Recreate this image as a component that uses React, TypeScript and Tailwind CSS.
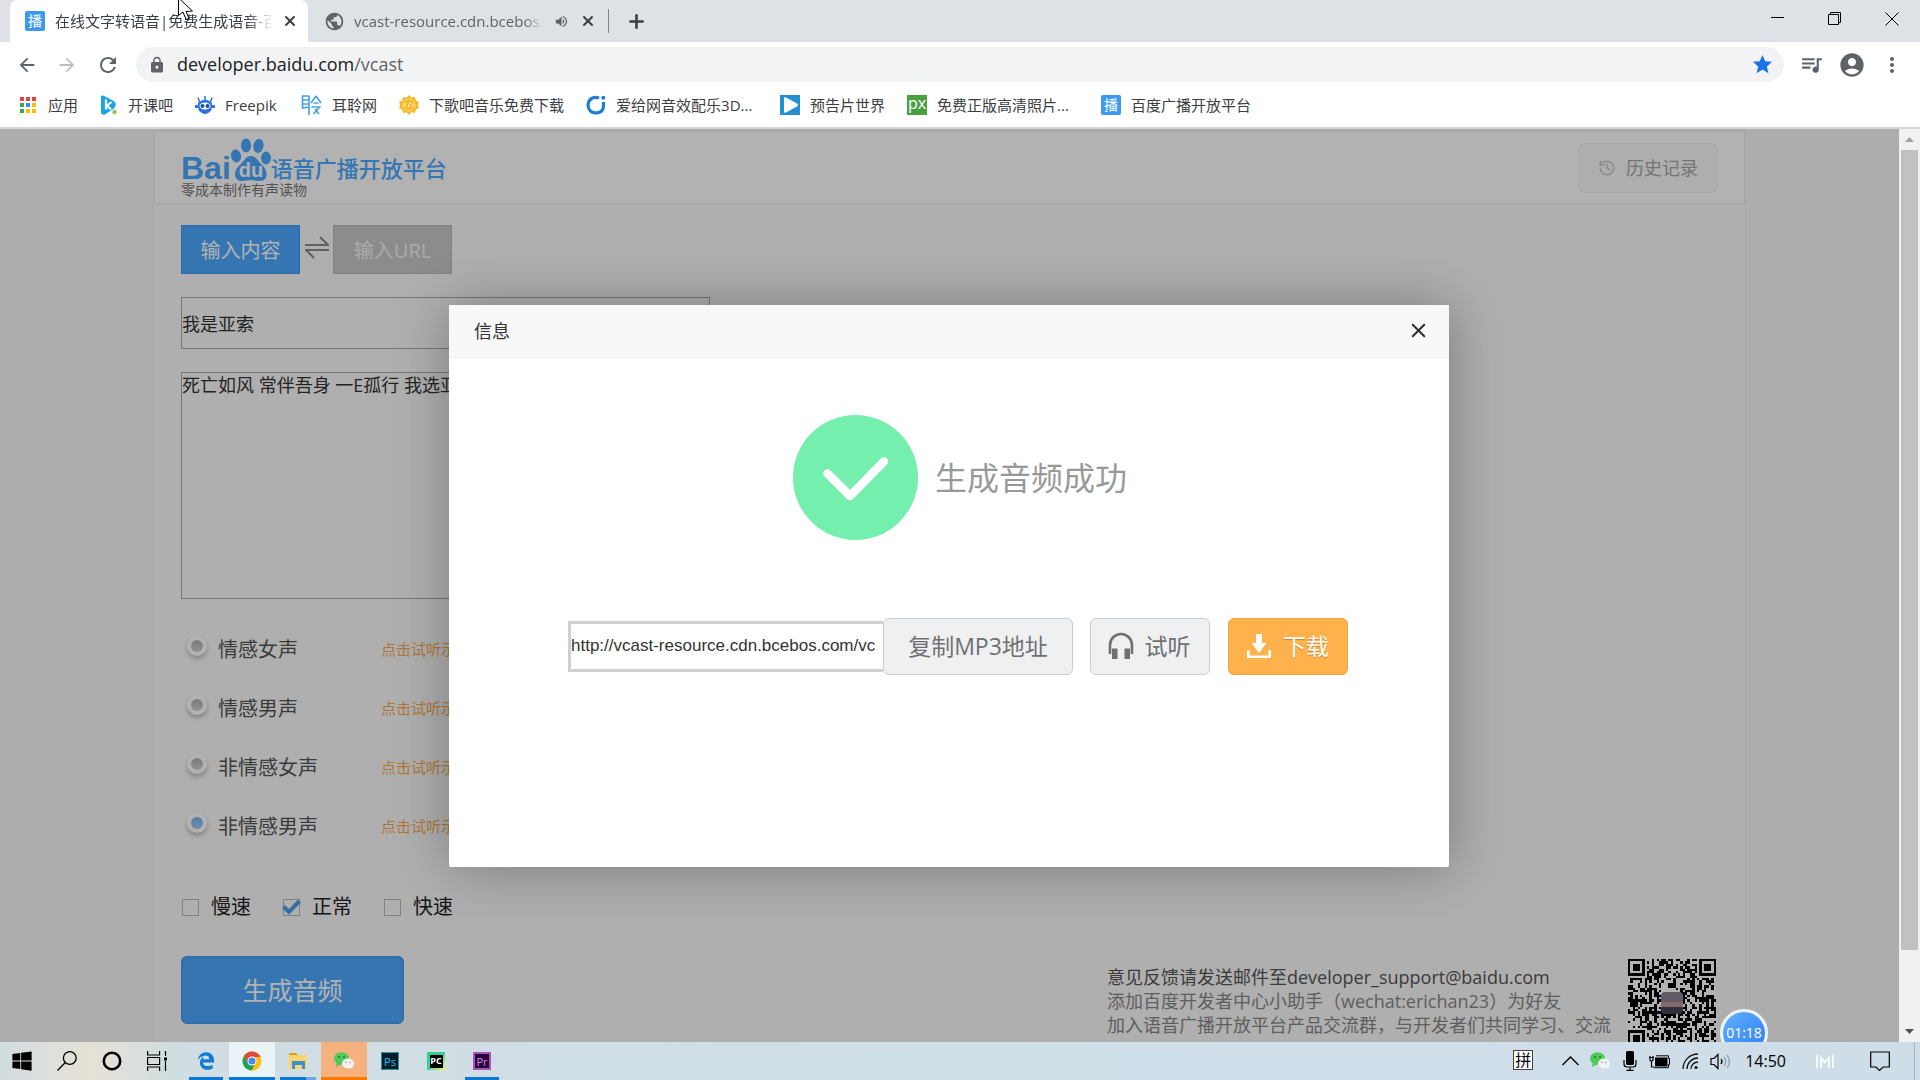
import React, { useState } from 'react';
import {
  MdAccountCircle,
  MdArrowBack,
  MdArrowForward,
  MdLock,
  MdMoreVert,
  MdPublic,
  MdQueueMusic,
  MdRefresh,
  MdStar,
  MdVolumeUp
} from 'react-icons/md';
import { FaEdgeLegacy, FaWindows } from 'react-icons/fa6';
import { HistoryIcon, PlusIcon, XIcon } from 'lucide-react';

interface Voice {
  id: string;
  name: string;
}

const VOICES: Voice[] = [
  { id: 'f-emotion', name: '情感女声' },
  { id: 'm-emotion', name: '情感男声' },
  { id: 'f-plain', name: '非情感女声' },
  { id: 'm-plain', name: '非情感男声' }
];

const SPEEDS = ['慢速', '正常', '快速'];

/* ---------- browser chrome ---------- */

const BoFavicon = () => (
  <span className="flex h-5 w-5 shrink-0 items-center justify-center rounded-xs bg-[#3b99f0] text-sm leading-none text-white">播</span>
);

const TabStrip = () => (
  <div className="flex h-[42px] items-center bg-[#dee1e6] pl-[10px]">
    <div className="flex h-full w-[298px] shrink-0 items-center rounded-t-lg bg-white pr-[10px] pl-[15px]">
      <BoFavicon />
      <div className="ml-[10px] w-[218px] overflow-hidden whitespace-nowrap text-[15px] text-[#3c4043] [mask-image:linear-gradient(to_right,black_88%,transparent)]">
        在线文字转语音|免费生成语音-百度
      </div>
      <button aria-label="关闭标签页" className="ml-auto text-[#3c4043]">
        <XIcon size={16} strokeWidth={3} />
      </button>
    </div>
    <div className="flex h-full w-[300px] shrink-0 items-center pr-3 pl-4">
      <MdPublic size={21} className="shrink-0 text-[#5f6368]" />
      <div className="ml-[9px] w-[189px] overflow-hidden whitespace-nowrap text-[15px] text-[#5f6368] [mask-image:linear-gradient(to_right,black_90%,transparent)]">
        vcast-resource.cdn.bcebos.com
      </div>
      <MdVolumeUp size={15} className="ml-[11px] shrink-0 text-[#5f6368]" />
      <button aria-label="关闭标签页" className="ml-auto text-[#3c4043]">
        <XIcon size={16} strokeWidth={3} />
      </button>
    </div>
    <div className="h-6 w-px bg-[#80868b]" />
    <button aria-label="新标签页" className="ml-[17px] text-[#3c4043]">
      <PlusIcon size={21} strokeWidth={3} />
    </button>
    <div className="ml-auto flex h-full items-center pb-[5px]">
      <button aria-label="最小化" className="flex w-[57px] justify-center">
        <svg width="13" height="13" viewBox="0 0 13 13"><path d="M0 5.500H13" stroke="#000" /></svg>
      </button>
      <button aria-label="还原" className="flex w-[57px] justify-center">
        <svg width="13" height="13" viewBox="0 0 13 13" fill="none" stroke="#000">
          <path d="M.5 2.500H10.500V12.500H.5ZM2.500 2.500V.5H12.500V10.500H10.500" />
        </svg>
      </button>
      <button aria-label="关闭" className="flex w-[57px] justify-center">
        <svg width="14" height="14" viewBox="0 0 14 14"><path d="M.5.5 13.500 13.500M13.500.5.5 13.500" stroke="#000" /></svg>
      </button>
    </div>
  </div>
);

const Toolbar = () => (
  <div className="flex h-[45px] items-center pr-4 pl-4 text-[#5f6368]">
    <button aria-label="后退" className="w-10"><MdArrowBack size={22} /></button>
    <button aria-label="前进" className="w-10 text-[#bdbfc2]"><MdArrowForward size={22} /></button>
    <button aria-label="刷新" className="w-10"><MdRefresh size={24} /></button>
    <div className="flex h-[35px] flex-1 items-center rounded-full bg-[#f1f3f4] pr-[10px] pl-3">
      <MdLock size={18} />
      <div className="ml-[11px] pb-px text-lg text-[#5f6368]">
        <span className="text-[#202124]">developer.baidu.com</span>/vcast
      </div>
      <MdStar size={23} className="ml-auto text-[#1a73e8]" />
    </div>
    <button aria-label="媒体控制" className="ml-[15px]"><MdQueueMusic size={25} /></button>
    <button aria-label="用户" className="ml-[14px]"><MdAccountCircle size={28} /></button>
    <button aria-label="菜单" className="ml-[14px]"><MdMoreVert size={24} /></button>
  </div>
);

const AppsIcon = () => (
  <svg width="20" height="20" viewBox="0 0 20 20">
    {['#ea4335', '#ea4335', '#ea4335', '#34a853', '#4285f4', '#fbbc04', '#34a853', '#fbbc04', '#fbbc04'].map((c, i) => (
      <rect key={i} x={2 + (i % 3) * 6} y={2 + Math.floor(i / 3) * 6} width="4" height="4" fill={c} />
    ))}
  </svg>
);

const KaikebaIcon = () => (
  <svg width="18" height="20" viewBox="0 0 18 20">
    <path d="M1 2Q1 0 3 .6L13 5.500q5 3.500 1 8L5 19.500Q1 20.500 1 17Z" fill="#19a5e4" />
    <path d="M6 4.500v10M11.500 7 7 10.500l4 4" stroke="#fff" strokeWidth="2.200" fill="none" />
    <circle cx="14.500" cy="17" r="2.600" fill="#8cc63f" stroke="#fff" strokeWidth=".8" />
  </svg>
);

const FreepikIcon = () => (
  <svg width="20" height="20" viewBox="0 0 20 20">
    <path d="M3 8q7-7 14 0l-.5 7q-6.500 8-13 0Z" fill="#2f73dc" />
    <path d="M10 5V1M4.500 7 3 2.500M15.500 7 17 2.500" stroke="#2f73dc" strokeWidth="1.500" />
    <path d="M0 10h20v3H0Z" fill="#2f73dc" />
    <ellipse cx="10" cy="11" rx="5.500" ry="3.500" fill="#fff" />
    <circle cx="7.500" cy="11" r="2" fill="#1a4fae" />
    <circle cx="12.500" cy="11" r="2" fill="#1a4fae" />
  </svg>
);

const ErlingIcon = () => (
  <svg width="21" height="20" viewBox="0 0 21 20" fill="none" stroke="#4aa3df" strokeWidth="1.700">
    <path d="M1 1h7.500M1.500 1v12l7-1M8 1v19M1 5h6M1 9h6M15 1l-5 7M15 1l5 7M12.500 8h5M10.500 12h8l-6 7M14 14l4 5" />
  </svg>
);

const XiagebaIcon = () => (
  <svg width="20" height="20" viewBox="0 0 20 20">
    <path d="M10 0l2.600 2.800L16 2l.8 3.600L20 7l-1.200 3L20 13l-3.200 1.400L16 18l-3.400-.8L10 20l-2.600-2.800L4 18l-.8-3.600L0 13l1.200-3L0 7l3.200-1.400L4 2l3.400.8Z" fill="#f6b820" />
    <circle cx="10" cy="10" r="6" fill="none" stroke="#fff8d8" strokeWidth=".6" />
    <path d="M7.500 8 5.500 10l2 2M12.500 8l2 2-2 2M11 7.500l-2 5" stroke="#fff" strokeWidth="1" fill="none" />
  </svg>
);

const AigeiIcon = () => (
  <svg width="20" height="20" viewBox="0 0 20 20" fill="none" stroke="#1c7ed6" strokeWidth="3.200">
    <path d="M13 3.200A7.500 7.800 0 1 0 11 17.800Q17.500 17 17.500 11V7" />
    <circle cx="17.300" cy="2.800" r="1" strokeWidth="2" />
  </svg>
);

const TrailerIcon = () => (
  <svg width="20" height="20" viewBox="0 0 20 20">
    <rect width="20" height="20" fill="#2490d0" />
    <path d="M4 3.500q0-2 2-1l11 6q2 1.500 0 3l-11 6q-2 1-2-1Z" fill="#fff" />
  </svg>
);

const PxIcon = () => (
  <span className="flex h-5 w-5 items-center justify-center bg-[#48a043] pb-1 text-base leading-none text-white">px</span>
);

const BOOKMARKS = [
  { label: '应用', icon: <AppsIcon />, width: '' },
  { label: '开课吧', icon: <KaikebaIcon />, width: '' },
  { label: 'Freepik', icon: <FreepikIcon />, width: 'w-[54px]' },
  { label: '耳聆网', icon: <ErlingIcon />, width: '' },
  { label: '下歌吧音乐免费下载', icon: <XiagebaIcon />, width: '' },
  { label: '爱给网音效配乐3D...', icon: <AigeiIcon />, width: 'w-[142px]' },
  { label: '预告片世界', icon: <TrailerIcon />, width: '' },
  { label: '免费正版高清照片...', icon: <PxIcon />, width: 'w-[142px]' },
  { label: '百度广播开放平台', icon: <BoFavicon />, width: '' }
];

const BookmarkBar = () => (
  <nav className="flex h-[42px] items-center gap-[22px] border-b-2 border-[#d4d4d4] pb-1 pl-[18px]">
    {BOOKMARKS.map((b) => (
      <a key={b.label} href="#" className="flex items-center gap-[10px] whitespace-nowrap text-[15px] text-[#3c4043]">
        {b.icon}
        <span className={b.width}>{b.label}</span>
      </a>
    ))}
  </nav>
);

/* ---------- page ---------- */

const BaiduLogo = () => (
  <div className="flex flex-col">
    <div className="flex items-end text-[#4caaff]">
      <span className="font-['Liberation_Sans'] text-[32px] leading-7 font-bold">Bai</span>
      <svg width="40" height="44" viewBox="0 0 40 44" fill="#4caaff">
        <ellipse cx="5" cy="18" rx="5" ry="6.500" transform="rotate(-12 5 18)" />
        <ellipse cx="15" cy="7.500" rx="5" ry="7" />
        <ellipse cx="27.500" cy="8" rx="5" ry="7" transform="rotate(10 27.500 8)" />
        <ellipse cx="35" cy="20" rx="5" ry="6.500" />
        <path d="M20 18c5 0 7 5 11 9 6 5 7 16-2 16-4 0-6-1-9-1s-5 1-9 1c-9 0-9-11-2-16 4-4 6-9 11-9Z" />
        <text x="20" y="39" textAnchor="middle" fill="#fff" fontFamily="Liberation Sans" fontSize="20" fontWeight="700">du</text>
      </svg>
      <span className="text-[22px] leading-7 font-medium">语音广播开放平台</span>
    </div>
    <span className="text-sm leading-4 text-[#777]">零成本制作有声读物</span>
  </div>
);

const SwapIcon = () => (
  <svg width="24" height="24" viewBox="0 0 24 24" fill="none" stroke="#8b8b8b" strokeWidth="2">
    <path d="M0 10H23L15 2M24 15H1L9 23" />
  </svg>
);

const QR_SIZE = 37;

const isFinder = (x: number, y: number) => {
  const nearX = x < 8 || x >= QR_SIZE - 8;
  const nearY = y < 8 || y >= QR_SIZE - 8;
  return nearX && nearY && !(x >= QR_SIZE - 8 && y >= QR_SIZE - 8);
};

const buildQrPath = () => {
  let seed = 20;
  let d = '';
  for (let y = 0; y < QR_SIZE; y++) {
    for (let x = 0; x < QR_SIZE; x++) {
      seed = (seed * 1103515245 + 12345) % 2147483648;
      if (!isFinder(x, y) && seed / 2147483648 > 0.48) d += `M${x} ${y}h1v1h-1Z`;
    }
  }
  return d;
};

const QrCode = () => (
  <svg width="88" height="88" viewBox="0 0 37 37" className="shrink-0 bg-white" shapeRendering="crispEdges">
    <path d={buildQrPath()} />
    {[[0, 0], [30, 0], [0, 30]].map(([x, y]) => (
      <g key={`${x}-${y}`}>
        <path d={`M${x} ${y}h7v7h-7ZM${x + 1} ${y + 1}v5h5v-5Z`} fillRule="evenodd" />
        <rect x={x + 2} y={y + 2} width="3" height="3" />
      </g>
    ))}
    <rect x="14" y="14" width="9" height="9" rx="1" fill="#8d8597" />
    <rect x="14" y="18" width="9" height="2" fill="#b8959a" />
    <rect x="14" y="20" width="9" height="3" rx="1" fill="#454456" />
  </svg>
);

const VoiceForm = () => {
  const [voice, setVoice] = useState('m-plain');
  const [speed, setSpeed] = useState('正常');
  return (
    <>
      <div className="flex items-center">
        <button className="h-[49px] w-[119px] border border-[#3f9bee] bg-[#4caaff] pt-0.5 text-xl text-white">输入内容</button>
        <span className="flex w-[33px] justify-center pb-1.5"><SwapIcon /></span>
        <button className="h-[49px] w-[119px] border border-[#bbb] bg-[#c9c9c9] pt-0.5 text-xl text-[#f4f4f4]">输入URL</button>
      </div>
      <input aria-label="标题" defaultValue="我是亚索" className="mt-[23px] block h-[52px] w-[529px] border border-[#a9a9a9] text-lg text-[#333]" />
      <textarea aria-label="内容" defaultValue="死亡如风 常伴吾身 一E孤行 我选亚索" className="mt-[23px] block h-[227px] w-[529px] resize-none border border-[#a9a9a9] text-lg leading-6 text-[#333]" />
      <div className="mt-[21px]">
        {VOICES.map((v) => (
          <div key={v.id} className="flex h-[59px] items-center">
            <label className="flex w-[200px] items-center text-xl text-[#555]">
              <input
                type="radio"
                name="voice"
                checked={voice === v.id}
                onChange={() => setVoice(v.id)}
                className="mr-[11px] mb-[7px] ml-[6px] flex h-5 w-5 appearance-none items-center justify-center rounded-full bg-white shadow-[0_3px_5px_rgba(0,0,0,0.25)] before:h-3 before:w-3 before:rounded-full before:bg-linear-to-b before:from-[#b0b0b0] before:to-[#d0d0d0] checked:before:from-[#78b4ec] checked:before:to-[#a0cdf2]"
              />
              {v.name}
            </label>
            <a href="#" className="text-[15px] text-[#fbab50]">点击试听示例</a>
          </div>
        ))}
      </div>
      <div className="mt-9 flex h-[30px] items-center">
        {SPEEDS.map((s) => (
          <label key={s} className="relative flex w-[101px] items-center text-xl text-[#222]">
            <input
              type="checkbox"
              checked={speed === s}
              onChange={() => setSpeed(s)}
              className="mr-3 ml-px h-[17px] w-[17px] appearance-none border border-[#bbb]"
            />
            {speed === s && (
              <svg className="absolute left-0" width="19" height="17" viewBox="0 0 19 17">
                <path d="M1.500 7.500 7 13 17.500 2" fill="none" stroke="#4a9fee" strokeWidth="4" />
              </svg>
            )}
            {s}
          </label>
        ))}
      </div>
    </>
  );
};

const VcastPage = () => (
  <div className="mx-[153px] mt-0.5 flex flex-1 flex-col border-x border-[#f2f2f2] bg-[#fbfbfb]">
    <header className="flex h-[73px] shrink-0 items-center justify-between border border-[#f0f0f0] bg-white pr-[27px] pl-[26px]">
      <BaiduLogo />
      <button className="flex h-[50px] w-[138px] items-center justify-center gap-[10px] rounded-md border border-[#f0f0f0] bg-[#fafafa] text-lg text-[#a6a6a6]">
        <HistoryIcon size={18} className="text-[#c8c8c8]" />
        历史记录
      </button>
    </header>
    <div className="pt-[21px] pr-[29px] pl-[27px]">
      <VoiceForm />
      <div className="mt-[34px] flex items-start justify-between">
        <button className="h-[68px] w-[223px] rounded-md border-2 border-[#429cf0] bg-[#4caaff] pt-0.5 text-[25px] text-white">生成音频</button>
        <div className="mt-[3px] flex">
          <div className="mt-1.5 w-[521px] text-lg leading-6 whitespace-nowrap text-[#888]">
            <p className="text-[#555]">意见反馈请发送邮件至developer_support@baidu.com</p>
            <p>添加百度开发者中心小助手（wechat:erichan23）为好友</p>
            <p>加入语音广播开放平台产品交流群，与开发者们共同学习、交流</p>
          </div>
          <QrCode />
        </div>
      </div>
    </div>
  </div>
);

const HeadphoneIcon = () => (
  <svg width="26" height="28" viewBox="0 0 26 28">
    <path d="M2 22V13a11 11 0 0 1 22 0v9" fill="none" stroke="#6e7073" strokeWidth="2.600" />
    <rect x="4" y="16.500" width="5.500" height="10.500" fill="#6e7073" />
    <rect x="16.500" y="16.500" width="5.500" height="10.500" fill="#6e7073" />
  </svg>
);

const DownloadIcon = () => (
  <svg width="24" height="26" viewBox="0 0 24 26">
    <path d="M9 1h6v9h4.500L12 20 4.500 10H9Z" fill="#fff" />
    <path d="M1.300 17v6.700h21.400V17" fill="none" stroke="#fff" strokeWidth="2.600" />
  </svg>
);

const SuccessDialog = ({ onClose }: { onClose: () => void }) => (
  <div role="dialog" aria-label="信息" className="h-[562px] w-[1000px] rounded-xs bg-white shadow-[1px_1px_55px_rgba(0,0,0,0.3)]">
    <div className="flex h-[53px] items-center justify-between border-b border-[#eee] bg-[#f8f8f8] pr-[19px] pl-[25px] text-lg text-[#333]">
      信息
      <button aria-label="关闭" onClick={onClose} className="text-[#2d2d2d]"><XIcon size={23} strokeWidth={2} /></button>
    </div>
    <div className="flex items-center gap-[17px] pt-[57px] pl-[344px]">
      <svg width="125" height="125" viewBox="0 0 125 125">
        <circle cx="62.500" cy="62.500" r="62.500" fill="#74efae" />
        <path d="M34.500 58.500 57 81 91 46.500" fill="none" stroke="#fff" strokeWidth="8.500" strokeLinecap="round" strokeLinejoin="round" />
      </svg>
      <span className="pt-0.5 text-[32px] text-[#999]">生成音频成功</span>
    </div>
    <div className="mt-[78px] flex items-center pl-[119px]">
      <input
        aria-label="MP3地址"
        defaultValue="http://vcast-resource.cdn.bcebos.com/vcast/audio.mp3"
        className="h-[51px] w-[315px] border-[3px] border-r-0 border-[#d0d0d0] pr-2 font-['Liberation_Sans'] text-[17px] text-[#333]"
      />
      <button className="h-[57px] w-[190px] rounded-md border border-[#ccc] bg-[#eff0f2] text-[23px] text-[#6e7073]">复制MP3地址</button>
      <button className="ml-[17px] flex h-[57px] w-[120px] items-center justify-center gap-[11px] rounded-md border border-[#ccc] bg-[#eff0f2] pr-0.5 text-[23px] text-[#6e7073]">
        <HeadphoneIcon />
        试听
      </button>
      <button className="ml-[18px] flex h-[57px] w-[120px] items-center justify-center gap-3 rounded-md border border-[#f2a53f] bg-[#ffb14c] text-[23px] text-white [text-shadow:0_1px_1px_#c98430]">
        <DownloadIcon />
        下载
      </button>
    </div>
  </div>
);

const ScrollBar = () => (
  <div className="flex w-[21px] shrink-0 flex-col border-l-2 border-[#f1f1f1] bg-[#f1f1f1] pr-0.5">
    <div className="flex h-[21px] items-center justify-center">
      <svg width="9" height="5" viewBox="0 0 9 5"><path d="M0 5 4.500 0 9 5Z" fill="#a3a3a3" /></svg>
    </div>
    <div className="flex-[800] bg-[#c1c1c1]" />
    <div className="flex-[71]" />
    <div className="flex h-[21px] items-center justify-center">
      <svg width="9" height="5" viewBox="0 0 9 5"><path d="M0 0 4.500 5 9 0Z" fill="#505050" /></svg>
    </div>
  </div>
);

/* ---------- taskbar ---------- */

const WechatIcon = ({ size }: { size: number }) => (
  <svg width={size} height={size} viewBox="0 0 20 20">
    <ellipse cx="7.500" cy="7.500" rx="7.500" ry="6.300" fill="#4fc95a" />
    <path d="M3 11 2 16l5-3Z" fill="#4fc95a" />
    <circle cx="5" cy="6" r=".9" fill="#1e6e2a" />
    <circle cx="10" cy="6" r=".9" fill="#1e6e2a" />
    <ellipse cx="14" cy="12.500" rx="6" ry="5" fill="#f3f3f3" />
    <path d="m15 16 3.500 2.500L18 14Z" fill="#f3f3f3" />
    <circle cx="12" cy="11.500" r=".7" fill="#888" />
    <circle cx="16" cy="11.500" r=".7" fill="#888" />
  </svg>
);

const ChromeIcon = () => (
  <svg width="20" height="20" viewBox="0 0 20 20">
    <circle cx="10" cy="10" r="9.500" fill="#fbc116" />
    <path d="M1.800 5.200A9.500 9.500 0 0 1 18.200 5.200L18.400 6H10L6.500 12Z" fill="#de4b3b" />
    <path d="M1.800 5.200A9.500 9.500 0 0 0 9.500 19.500L13.500 12 10 14 6.500 12Z" fill="#1da15f" />
    <circle cx="10" cy="10" r="4.500" fill="#fff" />
    <circle cx="10" cy="10" r="3.600" fill="#4b87ee" />
  </svg>
);

const FolderIcon = () => (
  <svg width="20" height="20" viewBox="0 0 20 20">
    <path d="M1 2h7l2 2h9v14H1Z" fill="#fbd66c" />
    <path d="M1 2h7l2 2H1Z" fill="#d9a21c" />
    <path d="M4 10h13v8h-3v-4H7v4H4Z" fill="#3f8fd3" />
  </svg>
);

const TaskViewIcon = () => (
  <svg width="20" height="20" viewBox="0 0 20 20" fill="none" stroke="#000" strokeWidth="1.200">
    <path d="M.6 0v4h12V0M.6 20v-4h12v4M.6 6.500h12v7H.6ZM18.500 0v5M18.500 10v10" />
    <path d="M17 6.500h3v3h-3Z" fill="#000" stroke="none" />
  </svg>
);

const PycharmIcon = () => (
  <span className="flex h-[18px] w-[18px] items-center justify-center bg-linear-to-br from-[#21d789] via-[#3cc9a0] to-[#fcf84a]">
    <span className="flex h-[13px] w-[13px] items-center justify-center bg-black pb-0.5 text-[9px] leading-none font-bold text-white">PC</span>
  </span>
);

const TASKS = [
  { name: 'Edge', icon: <FaEdgeLegacy size={18} color="#0f7bd4" />, cell: '', bar: 'mx-[6px] bg-[#0a78d6]' },
  { name: 'Chrome', icon: <ChromeIcon />, cell: 'bg-[#eaf3f6]', bar: 'bg-[#0a78d6]' },
  { name: '文件资源管理器', icon: <FolderIcon />, cell: '', bar: 'mx-[5px] border-r-10 border-[#6aa9e4] bg-[#0a78d6]' },
  { name: '微信', icon: <WechatIcon size={20} />, cell: 'bg-[#f5b27f]', bar: 'bg-[#ff7800]' },
  {
    name: 'Photoshop',
    icon: <span className="flex h-[18px] w-[18px] items-center justify-center border border-[#2c8fa5] bg-[#001d29] text-[11px] leading-none text-[#1fc3f0]">Ps</span>,
    cell: '',
    bar: ''
  },
  { name: 'PyCharm', icon: <PycharmIcon />, cell: '', bar: '' },
  {
    name: 'Premiere',
    icon: <span className="flex h-[18px] w-[18px] items-center justify-center border-2 border-[#a755b5] bg-[#26003a] text-[11px] leading-none text-[#dc85ea]">Pr</span>,
    cell: '',
    bar: 'mx-[6px] bg-[#0a78d6]'
  }
];

const Taskbar = () => (
  <footer className="flex h-[38px] shrink-0 bg-linear-to-r from-[#d2dde1] via-[#cfdfe8] to-[#cfdde9]">
    <div className="flex bg-linear-to-r from-[#d2dde0] via-[#e6e1d6] to-[#cddde1] pr-[3px]">
      <button aria-label="开始" className="flex w-11 items-center justify-center"><FaWindows size={22} /></button>
      <button aria-label="搜索" className="flex w-[45px] items-center justify-center">
        <svg width="20" height="20" viewBox="0 0 20 20" fill="none" stroke="#000" strokeWidth="1.300">
          <circle cx="12.800" cy="7" r="6.400" />
          <path d="M8.300 11.500.5 19.500" />
        </svg>
      </button>
      <button aria-label="Cortana" className="flex w-[45px] items-center justify-center">
        <svg width="20" height="20" viewBox="0 0 20 20"><circle cx="10" cy="10" r="8.200" fill="none" stroke="#000" strokeWidth="2.600" /></svg>
      </button>
      <button aria-label="任务视图" className="flex w-[46px] items-center justify-center"><TaskViewIcon /></button>
    </div>
    {TASKS.map((t) => (
      <button key={t.name} aria-label={t.name} className={`flex w-[46px] flex-col ${t.cell}`}>
        <span className="flex w-full flex-1 items-center justify-center pt-[3px]">{t.icon}</span>
        <span className="flex h-[3px] w-full"><span className={`h-[3px] flex-1 ${t.bar}`} /></span>
      </button>
    ))}
    <div className="ml-auto flex items-center text-black">
      <span className="mb-0.5 flex h-5 w-5 items-center justify-center border border-[#444] bg-white text-base leading-none">拼</span>
      <svg className="ml-[29px]" width="17" height="10" viewBox="0 0 17 10"><path d="M.5 9 8.500 1l8 8" fill="none" stroke="#000" strokeWidth="1.400" /></svg>
      <span className="ml-[11px]"><WechatIcon size={20} /></span>
      <svg className="ml-[13px]" width="14" height="20" viewBox="0 0 14 20">
        <rect x="3" y="0" width="8" height="14" rx="1.500" />
        <path d="M1 9v4q0 3 3 3h6q3 0 3-3V9M7 16v3M3.500 19.300h7" fill="none" stroke="#000" strokeWidth="1.200" />
      </svg>
      <svg className="ml-3" width="21" height="15" viewBox="0 0 21 15">
        <path d="M6 3.500h12.500v9H6Z" />
        <path d="M7 1.800h12.500v2.700h1v6h-1v3.200H5" fill="none" stroke="#000" />
        <path d="M1 2v4q0 1 1.500 1Q4 7 4 6V2M0 3.500h5M2.500 7v6H5" fill="none" stroke="#000" strokeWidth="1.200" />
      </svg>
      <svg className="ml-3" width="17" height="17" viewBox="0 0 17 17" fill="none" stroke="#111" strokeWidth="1.300">
        <path d="M1 16A15 15 0 0 1 16 1M5 16A11 11 0 0 1 16 5M9 16a7 7 0 0 1 7-7" />
        <circle cx="14" cy="14.500" r="1.600" fill="#111" stroke="none" />
      </svg>
      <svg className="ml-[11px]" width="21" height="17" viewBox="0 0 21 17" fill="none" stroke="#000" strokeWidth="1.200">
        <path d="M1 5.500h3L8 1.500v14l-4-4H1Z" />
        <path d="M11 6q2 2.500 0 5" />
        <path d="M14 4q3.500 4.500 0 9M17 2q5 6.500 0 13" stroke="#8d999f" />
      </svg>
      <span className="ml-[14px] text-base">14:50</span>
      <svg className="ml-[30px]" width="18" height="14" viewBox="0 0 18 14" fill="none" stroke="#f4f9fc" strokeWidth="2">
        <path d="M1 1v13M5 14V4L9 8.500 13 4v10M17 1v13" />
      </svg>
      <svg className="ml-9" width="20" height="20" viewBox="0 0 20 20" fill="none" stroke="#000" strokeWidth="1.200">
        <path d="M.7 1h18.600v15H13l-3.500 3.500L6 16H.7Z" />
      </svg>
      <span className="mr-[5px] ml-6 h-[38px] w-px bg-[#a5b3bb]" />
    </div>
  </footer>
);

const App: React.FC = () => {
  const [dialogOpen, setDialogOpen] = useState(true);
  return (
    <div className="relative flex h-screen flex-col overflow-hidden bg-white font-['Open_Sans','Noto_Sans_CJK_SC',sans-serif]">
      <TabStrip />
      <Toolbar />
      <BookmarkBar />
      <div className="flex min-h-0 flex-1">
        <main className="relative flex min-w-0 flex-1 flex-col overflow-hidden bg-[#f8f8f8]">
          <VcastPage />
          {dialogOpen && (
            <div className="absolute inset-0 flex items-center justify-center bg-black/30 pr-px">
              <SuccessDialog onClose={() => setDialogOpen(false)} />
            </div>
          )}
          {/* recording timer, half hidden by the taskbar */}
          <div className="absolute right-[131px] -bottom-[15px] flex h-12 w-12 items-center justify-center rounded-full border-3 border-[#eef4fb] bg-linear-to-br from-[#62b0ff] to-[#2f7df0] text-sm text-white">
            01:18
          </div>
        </main>
        <ScrollBar />
      </div>
      <Taskbar />
      <svg className="absolute top-0 left-[178px]" width="16" height="27" viewBox="0 0 16 27">
        <path d="M.5-2V15.500L5 12l3 7.500 3-1.200L8 11.500l6.500-.5Z" fill="#fff" stroke="#000" />
      </svg>
    </div>
  );
};

export default App;
